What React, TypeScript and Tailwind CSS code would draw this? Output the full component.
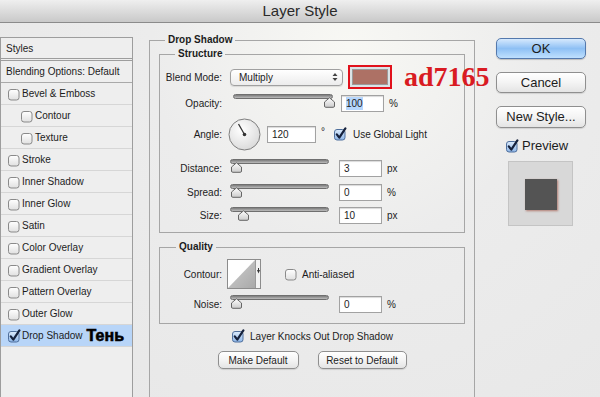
import React from 'react';

const ui = "font-['Liberation_Sans',Arial,sans-serif]";

function Box({ on = false }: { on?: boolean }) {
  return (
    <svg width="14" height="14" viewBox="0 0 14 14" className="shrink-0">
      <defs>
        <linearGradient id="cbOff" x1="0" y1="0" x2="0" y2="1">
          <stop offset="0" stopColor="#ffffff" />
          <stop offset="1" stopColor="#e0e0e0" />
        </linearGradient>
        <linearGradient id="cbOn" x1="0" y1="0" x2="0" y2="1">
          <stop offset="0" stopColor="#dcebfc" />
          <stop offset="1" stopColor="#8db6e8" />
        </linearGradient>
      </defs>
      <rect
        x="1.5"
        y="2.5"
        width="10.5"
        height="10.5"
        rx="2.5"
        fill={on ? 'url(#cbOn)' : 'url(#cbOff)'}
        stroke={on ? '#4f6f9c' : '#8a8a8a'}
      />
      {on && (
        <path
          d="M3.8 7.4 L6.3 10.6 L12.4 1.4"
          fill="none"
          stroke="#15213c"
          strokeWidth="2.2"
          strokeLinecap="round"
          strokeLinejoin="round"
        />
      )}
    </svg>
  );
}

function Slider({ cls, at }: { cls: string; at: number }) {
  return (
    <div className={`relative h-[16px] mb-[4px] shrink-0 ${cls}`}>
      <div className="mt-[1px] h-[5px] rounded-full border border-[#6f6f6f] bg-gradient-to-b from-[#7c7c7c] to-[#bdbdbd]" />
      <svg width="13" height="11" viewBox="0 0 13 11" className="absolute top-[4px]" style={{ left: at }}>
        <defs>
          <linearGradient id="thumb" x1="0" y1="0" x2="0" y2="1">
            <stop offset="0" stopColor="#ffffff" />
            <stop offset="1" stopColor="#cbcbcb" />
          </linearGradient>
        </defs>
        <path
          d="M1.5 9 V5 L6.5 0.8 L11.5 5 V9 Q11.5 10.3 10.2 10.3 H2.8 Q1.5 10.3 1.5 9Z"
          fill="url(#thumb)"
          stroke="#666"
        />
      </svg>
    </div>
  );
}

function Field({ value, cls, sel = false }: { value: string; cls: string; sel?: boolean }) {
  return (
    <div className={`h-[17px] shrink-0 border border-[#a2a2a2] bg-white pl-[4px] shadow-[inset_0_1px_1px_rgba(0,0,0,0.15)] flex items-center ${cls}`}>
      <span className={sel ? 'bg-[#b6d6fc] leading-[13px]' : 'leading-[13px]'}>{value}</span>
    </div>
  );
}

function Label({ children }: { children: React.ReactNode }) {
  return <div className="w-[62px] shrink-0 text-right">{children}</div>;
}

function Btn({ children, cls }: { children: React.ReactNode; cls: string }) {
  return (
    <div
      className={`flex items-center justify-center rounded-[5px] border border-[#8f8f8f] bg-gradient-to-b from-[#ffffff] via-[#f4f4f4] to-[#e4e4e4] shadow-[0_1px_1px_rgba(0,0,0,0.12)] ${cls}`}
    >
      {children}
    </div>
  );
}

const styleRows: { name: string; sub?: boolean; on?: boolean }[] = [
  { name: 'Bevel & Emboss' },
  { name: 'Contour', sub: true },
  { name: 'Texture', sub: true },
  { name: 'Stroke' },
  { name: 'Inner Shadow' },
  { name: 'Inner Glow' },
  { name: 'Satin' },
  { name: 'Color Overlay' },
  { name: 'Gradient Overlay' },
  { name: 'Pattern Overlay' },
  { name: 'Outer Glow' },
  { name: 'Drop Shadow', on: true },
];

export default function App() {
  return (
    <div
      className={`flex h-[397px] w-[600px] flex-col overflow-hidden bg-[radial-gradient(ellipse_at_58%_12%,#f8f8f4_0%,#ececec_40%,#e7e7e7_100%)] text-[10px] text-[#1c1c1c] ${ui}`}
    >
      {/* title bar */}
      <div className="flex h-[23px] shrink-0 items-center justify-center border-b border-[#8b8b8b] bg-gradient-to-b from-[#efefef] to-[#c9c9c9] text-[15px] text-[#2a2a2a]">
        Layer Style
      </div>

      <div className="flex flex-1">
        {/* styles list */}
        <div className="mt-[14px] h-[400px] w-[133px] shrink-0 border-l border-r border-t border-[#9d9d9d] bg-[#eeeeee]">
          <div className="flex h-[23px] items-center border-b-[3px] border-double border-[#9d9d9d] pl-[5px]">Styles</div>
          <div className="flex h-[22px] items-center border-b border-[#a9a9a9] pl-[5px]">Blending Options: Default</div>
          {styleRows.map((r) => (
            <div
              key={r.name}
              className={`flex h-[22px] items-center border-b border-[#d6d6d6] ${r.sub ? 'pl-[19px]' : 'pl-[6px]'} ${r.on ? 'bg-[#b8d5f8]' : ''}`}
            >
              <Box on={r.on} />
              <span className="ml-[1px]">{r.name}</span>
              {r.on && (
                <span className="ml-[4px] text-[16px] font-bold leading-none text-black [-webkit-text-stroke:0.6px_black]">
                  Тень
                </span>
              )}
            </div>
          ))}
        </div>

        {/* main settings */}
        <div className="ml-[16px] w-[326px] shrink-0">
          <fieldset className="mt-[10px] h-[400px] min-w-0 border border-[#a6a6a6] px-[9px]">
            <legend className="ml-[6px] px-[3px] font-bold leading-[14px]">Drop Shadow</legend>

            <fieldset className="h-[186px] min-w-0 border border-[#a6a6a6]">
              <legend className="ml-[15px] px-[3px] font-bold leading-[14px]">Structure</legend>

              <div className="flex h-[32px] items-center">
                <Label>Blend Mode:</Label>
                <div className="ml-[8px] flex h-[17px] w-[113px] shrink-0 items-center justify-between rounded-[4px] border border-[#a0a0a0] bg-gradient-to-b from-white to-[#ececec] pl-[8px] pr-[4px] shadow-[0_1px_1px_rgba(0,0,0,0.1)]">
                  <span>Multiply</span>
                  <svg width="6" height="10" viewBox="0 0 6 10">
                    <path d="M0.5 4 L3 1 L5.5 4Z M0.5 6 L3 9 L5.5 6Z" fill="#444" />
                  </svg>
                </div>
                <div className="ml-[5px] h-[24px] w-[44px] shrink-0 border-2 border-[#e1111b] bg-[#dbe3e6] p-[2px]">
                  <div className="h-full w-full border border-[#9a9a9a] bg-[#ad7165]" />
                </div>
                <span className="relative z-10 ml-[12px] shrink-0 whitespace-nowrap font-['Liberation_Serif',serif] text-[28px] font-bold leading-none text-[#d91b22]">
                  ad7165
                </span>
              </div>

              <div className="flex h-[20px] items-center">
                <Label>Opacity:</Label>
                <Slider cls="ml-[11px] w-[100px]" at={90} />
                <Field value="100" cls="ml-[8px] w-[43px]" sel />
                <span className="ml-[5px]">%</span>
              </div>

              <div className="flex h-[42px] items-center">
                <Label>Angle:</Label>
                <svg width="33" height="33" viewBox="0 0 33 33" className="ml-[6px] shrink-0">
                  <defs>
                    <radialGradient id="dial" cx="0.4" cy="0.35" r="0.7">
                      <stop offset="0" stopColor="#ffffff" />
                      <stop offset="1" stopColor="#d9d9d9" />
                    </radialGradient>
                  </defs>
                  <circle cx="16.5" cy="16.5" r="15.5" fill="url(#dial)" stroke="#7e7e7e" />
                  <line x1="16.5" y1="16.5" x2="10.5" y2="6" stroke="#333" strokeWidth="1.3" />
                  <circle cx="16.5" cy="16.5" r="1.8" fill="#333" />
                </svg>
                <Field value="120" cls="ml-[6px] w-[49px]" />
                <span className="ml-[5px] self-start pt-[11px]">°</span>
                <div className="ml-[8px] flex items-center">
                  <Box on />
                  <span className="ml-[6px]">Use Global Light</span>
                </div>
              </div>

              <div className="flex h-[26px] items-center">
                <Label>Distance:</Label>
                <Slider cls="ml-[8px] w-[99px]" at={0} />
                <Field value="3" cls="ml-[10px] w-[43px]" />
                <span className="ml-[5px]">px</span>
              </div>

              <div className="flex h-[23px] items-center">
                <Label>Spread:</Label>
                <Slider cls="ml-[8px] w-[99px]" at={0} />
                <Field value="0" cls="ml-[10px] w-[43px]" />
                <span className="ml-[5px]">%</span>
              </div>

              <div className="flex h-[23px] items-center">
                <Label>Size:</Label>
                <Slider cls="ml-[8px] w-[99px]" at={7} />
                <Field value="10" cls="ml-[10px] w-[43px]" />
                <span className="ml-[5px]">px</span>
              </div>
            </fieldset>

            <fieldset className="mt-[7px] h-[84px] min-w-0 border border-[#a6a6a6]">
              <legend className="ml-[16px] px-[3px] font-bold leading-[14px]">Quality</legend>

              <div className="mt-[3px] flex h-[34px] items-center">
                <Label>Contour:</Label>
                <svg width="34" height="30" viewBox="0 0 34 30" className="ml-[5px] shrink-0">
                  <defs>
                    <linearGradient id="ramp" x1="0" y1="0" x2="1" y2="1">
                      <stop offset="0" stopColor="#d0d0d0" />
                      <stop offset="1" stopColor="#a9a9a9" />
                    </linearGradient>
                  </defs>
                  <rect x="0.5" y="0.5" width="33" height="29" fill="#f2f2f2" stroke="#8c8c8c" />
                  <rect x="1" y="1" width="27" height="28" fill="#ffffff" />
                  <path d="M1 29 L28 1 L28 29Z" fill="url(#ramp)" />
                  <line x1="28.5" y1="1" x2="28.5" y2="29" stroke="#9a9a9a" />
                  <path d="M30 11 L33 11 L31.5 14.5Z" fill="#333" />
                  <line x1="31.5" y1="9" x2="31.5" y2="11" stroke="#333" />
                </svg>
                <div className="ml-[23px] flex items-center">
                  <Box />
                  <span className="ml-[4px]">Anti-aliased</span>
                </div>
              </div>

              <div className="flex h-[26px] items-center">
                <Label>Noise:</Label>
                <Slider cls="ml-[8px] w-[99px]" at={0} />
                <Field value="0" cls="ml-[10px] w-[43px]" />
                <span className="ml-[5px]">%</span>
              </div>
            </fieldset>

            <div className="mt-[3px] flex h-[18px] items-center justify-center">
              <Box on />
              <span className="ml-[5px]">Layer Knocks Out Drop Shadow</span>
            </div>

            <div className="mt-[6px] flex justify-center gap-[19px]">
              <Btn cls="h-[18px] w-[81px]">Make Default</Btn>
              <Btn cls="h-[18px] w-[89px]">Reset to Default</Btn>
            </div>
          </fieldset>
        </div>

        {/* buttons column */}
        <div className="ml-[21px] mt-[15px] flex w-[90px] shrink-0 flex-col text-[13px]">
          <div className="flex h-[21px] items-center justify-center rounded-[5px] border border-[#5479ad] bg-gradient-to-b from-[#d6e9fd] via-[#8ec0f4] to-[#bfe0fe] shadow-[0_1px_1px_rgba(0,0,0,0.2)]">
            OK
          </div>
          <Btn cls="mt-[13px] h-[21px]">Cancel</Btn>
          <Btn cls="mt-[13px] h-[22px]">New Style...</Btn>
          <div className="mt-[7px] flex h-[22px] items-center pl-[9px]">
            <Box on />
            <span className="ml-[3px]">Preview</span>
          </div>
          <div className="ml-[12px] mt-[4px] flex h-[65px] w-[65px] items-start border border-[#c4c4c4] bg-[#d8d8d8] pl-[16px] pt-[17px]">
            <div className="h-[31px] w-[32px] bg-[#545454] shadow-[1px_1px_2px_rgba(173,113,101,0.9)]" />
          </div>
        </div>
      </div>
    </div>
  );
}
